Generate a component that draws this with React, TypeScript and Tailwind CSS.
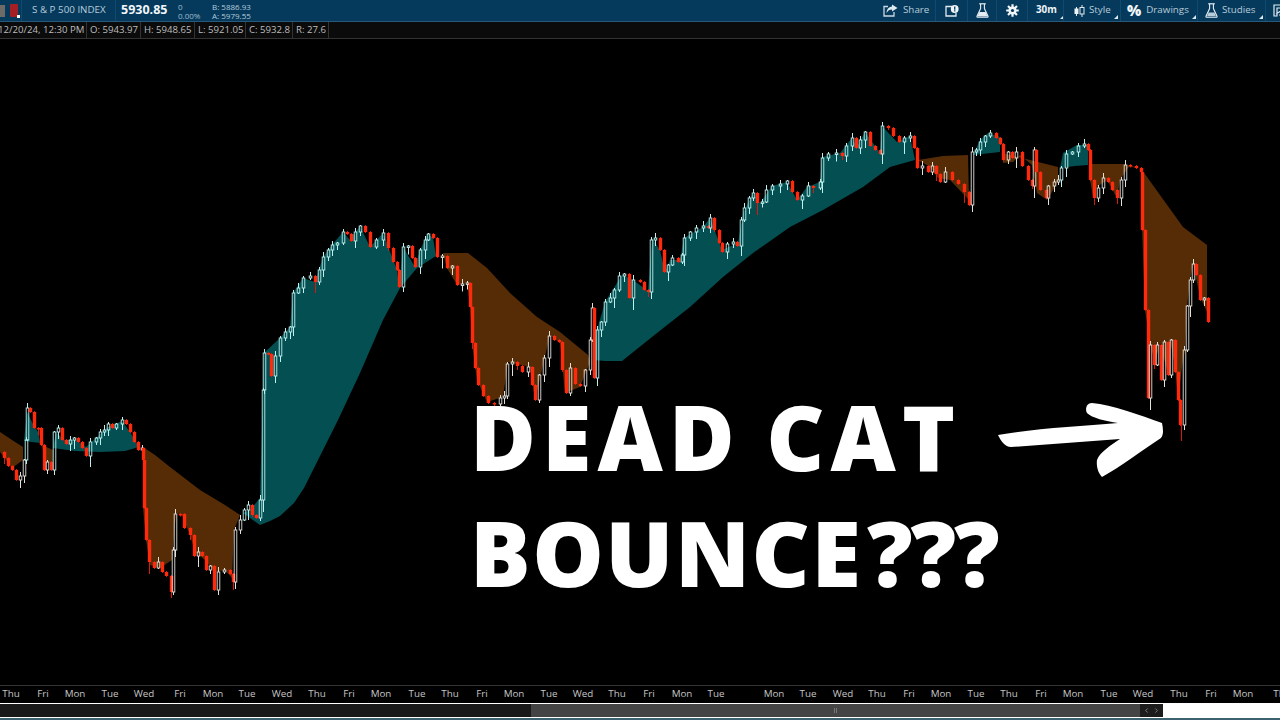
import React from "react";
import { ChevronLeft, ChevronRight } from "lucide-react";

type Pt = [number, number];

// ── Chart data (page coordinates, chart svg starts at y=39) ──────────────────

const PRICE: Pt[] = [
  [0, 452], [4, 458], [8, 466], [12, 470], [16, 480], [20, 476], [24, 460], [26, 440], [27, 408], [30, 412], [34, 428],
  [38, 428], [41, 445], [44, 470], [47, 462], [51, 470], [54, 432], [58, 428], [62, 440], [66, 444], [70, 440], [74, 438],
  [78, 442], [82, 448], [86, 456], [90, 442], [96, 438], [100, 432], [104, 430], [108, 424], [112, 428], [116, 424],
  [122, 420], [126, 424], [130, 432], [134, 442], [138, 450], [142, 448], [143, 460], [144, 508], [146, 540], [149, 562],
  [154, 568], [158, 562], [162, 572], [166, 576], [171, 592], [173, 550], [175, 514], [180, 514], [184, 528], [190, 535],
  [194, 556], [198, 552], [202, 556], [206, 570], [210, 566], [214, 590], [218, 572], [224, 570], [230, 574], [233, 582],
  [235, 530], [240, 520], [244, 510], [248, 505], [252, 515], [256, 518], [260, 500],
  [263, 390], [264, 353], [268, 354], [271, 376], [275, 356], [280, 338], [285, 332], [290, 327], [293, 293], [298, 288],
  [303, 278], [310, 276], [315, 282], [319, 270], [323, 257], [328, 250], [332, 245], [337, 243], [343, 232], [347, 234],
  [351, 241], [355, 232], [360, 226], [365, 232], [370, 247], [376, 240], [383, 233], [388, 248], [393, 262], [397, 270],
  [399, 287], [403, 247], [408, 246], [412, 258], [415, 267], [420, 250], [425, 240], [428, 234], [433, 238], [437, 257],
  [442, 256], [447, 268], [452, 266], [457, 285], [462, 284], [467, 283], [470, 307], [472, 343], [475, 368], [478, 385],
  [483, 396], [488, 403], [494, 404], [500, 398], [504, 396], [507, 364], [512, 362], [517, 366], [522, 372], [528, 367],
  [532, 385], [535, 400], [539, 375], [544, 358], [549, 336], [554, 340], [559, 342], [562, 370], [566, 393], [570, 368],
  [575, 384], [580, 386], [585, 370], [590, 340], [592, 308], [594, 378], [597, 330], [601, 322], [605, 302], [610, 298],
  [614, 290], [619, 276], [624, 274], [629, 298], [633, 280], [640, 282], [644, 290], [648, 292], [651, 240], [655, 238],
  [660, 250], [664, 272], [668, 265], [672, 258], [678, 262], [682, 255], [684, 238], [690, 232], [696, 228], [703, 226],
  [708, 228], [710, 218], [714, 230], [719, 243], [722, 252], [727, 244], [733, 242], [737, 246], [741, 220], [744, 208],
  [749, 198], [753, 193], [757, 203], [762, 202], [766, 190], [772, 186], [780, 184], [787, 181], [792, 192], [797, 200],
  [802, 196], [808, 186], [813, 188], [820, 182], [822, 158], [828, 154], [836, 153], [842, 156], [846, 146], [852, 138],
  [856, 148], [860, 140], [865, 132], [870, 146], [875, 150], [880, 154], [882, 126], [888, 128], [893, 136], [899, 142],
  [904, 138], [910, 136], [914, 148], [917, 168], [922, 166], [928, 172], [932, 166], [936, 174], [940, 182], [945, 172],
  [952, 180], [958, 184], [964, 192], [969, 205], [972, 152], [976, 150], [980, 142], [985, 136], [990, 133], [996, 138],
  [1000, 144], [1003, 160], [1008, 152], [1012, 158], [1016, 152], [1022, 166], [1028, 180], [1032, 186], [1034, 150],
  [1036, 172], [1040, 190], [1046, 198], [1048, 186], [1054, 182], [1058, 180], [1061, 168], [1066, 154], [1072, 152],
  [1078, 146], [1084, 144], [1088, 150], [1090, 180], [1094, 198], [1098, 188], [1103, 178], [1108, 182], [1112, 190],
  [1117, 198], [1121, 180], [1125, 165], [1130, 166], [1136, 168], [1141, 172], [1142, 230], [1145, 310], [1148, 398],
  [1150, 345], [1154, 365], [1157, 345], [1161, 380], [1164, 342], [1168, 375], [1171, 340], [1175, 372], [1178, 400],
  [1180, 425], [1184, 350], [1187, 306], [1190, 280], [1193, 264], [1196, 275], [1200, 300], [1204, 298], [1208, 322],
];

const TEAL: Pt[][] = [
  [[24, 441], [27, 412], [33, 424], [38, 432], [40, 443]],
  [[53, 448], [56, 432], [64, 440], [76, 440], [86, 447], [96, 438], [108, 427], [122, 421], [130, 432], [139, 447], [125, 451], [100, 452], [75, 451]],
  [[243, 513], [250, 510], [260, 498], [263, 390], [264, 353], [280, 338], [290, 327], [293, 293], [303, 278], [315, 282], [323, 257], [332, 245], [343, 232], [350, 240], [360, 226], [370, 247], [383, 233], [397, 270], [399, 287], [403, 247], [415, 267], [420, 250], [428, 234], [433, 238], [436, 256], [417, 268], [400, 288], [383, 320], [360, 373], [338, 420], [320, 456], [304, 488], [294, 503], [280, 516], [270, 521], [260, 525]],
  [[594, 360], [597, 330], [605, 302], [622, 275], [633, 280], [648, 291], [652, 238], [660, 250], [665, 272], [670, 260], [680, 260], [684, 238], [703, 227], [710, 218], [722, 250], [738, 243], [743, 213], [753, 193], [760, 203], [772, 186], [787, 182], [797, 200], [807, 187], [820, 182], [822, 157], [840, 153], [852, 138], [857, 147], [865, 132], [880, 153], [882, 126], [897, 142], [910, 136], [915, 160], [890, 167], [863, 187], [823, 210], [790, 227], [753, 253], [723, 277], [690, 307], [657, 333], [622, 361], [605, 361]],
  [[973, 155], [980, 140], [988, 133], [1000, 137], [1000, 152], [982, 154]],
  [[1060, 168], [1063, 153], [1077, 145], [1088, 145], [1088, 165], [1075, 166]],
];

const BROWN: Pt[][] = [
  [[0, 432], [12, 440], [23, 447], [23, 460], [12, 468], [0, 452]],
  [[42, 445], [53, 450], [53, 462], [45, 462]],
  [[143, 447], [155, 455], [170, 467], [200, 490], [225, 505], [240, 515], [234, 530], [232, 578], [225, 570], [215, 572], [205, 560], [195, 552], [190, 535], [182, 515], [176, 513], [172, 560], [160, 568], [150, 565], [146, 540], [143, 508]],
  [[443, 253], [468, 253], [487, 268], [510, 293], [537, 317], [560, 332], [588, 355], [590, 362], [580, 387], [565, 393], [560, 343], [550, 335], [535, 400], [530, 367], [508, 362], [503, 397], [487, 402], [477, 380], [472, 343], [470, 307], [467, 283], [457, 285], [447, 268]],
  [[918, 160], [943, 156], [968, 155], [969, 200], [950, 180], [938, 178], [930, 167]],
  [[1002, 153], [1022, 158], [1058, 167], [1058, 182], [1047, 200], [1037, 193], [1032, 165], [1020, 155], [1013, 162], [1003, 163]],
  [[1090, 164], [1123, 164], [1142, 170], [1183, 227], [1207, 245], [1207, 312], [1200, 297], [1193, 263], [1190, 280], [1187, 307], [1185, 350], [1182, 367], [1178, 400], [1175, 367], [1170, 340], [1167, 370], [1160, 343], [1155, 363], [1150, 343], [1145, 310], [1142, 227], [1141, 170], [1130, 165], [1120, 180], [1117, 198], [1107, 180], [1097, 187], [1093, 197], [1090, 180]],
];

const pts = (p: Pt[]) => p.map(([x, y]) => `${x},${y}`).join(" ");

// true when this stretch of the price sits on a teal cloud, candles get a cyan tint
function onTeal(x: number) {
  return (x > 24 && x < 40) || (x > 53 && x < 140) || (x > 243 && x < 437) || (x > 594 && x < 915) || (x > 972 && x < 1000) || (x > 1060 && x < 1088);
}

function Candles() {
  return (
    <g>
      {PRICE.slice(1).map(([x, close], i) => {
        const open = PRICE[i][1];
        const top = Math.min(open, close);
        const h = Math.max(Math.abs(close - open), 1.5);
        const up = close < open;
        const wick = ((i * 7) % 5) + 1;
        const tail = ((i * 11) % 7) + (i % 4 === 0 ? 6 : 1);
        if (!up) {
          return (
            <g key={x}>
              <line x1={x + 0.5} x2={x + 0.5} y1={top - 1} y2={top + h + (i % 5 === 0 ? tail : 1)} stroke="#d81a10" strokeWidth="1" />
              <rect x={x - 1.2} y={top} width="3.4" height={h} fill="#ff2a0c" />
            </g>
          );
        }
        const c = onTeal(x) ? "#bdf0ee" : "#e4e0da";
        return (
          <g key={x}>
            <line x1={x + 0.5} x2={x + 0.5} y1={top - wick} y2={top} stroke={c} strokeWidth="1" />
            <line x1={x + 0.5} x2={x + 0.5} y1={top + h} y2={top + h + tail} stroke={c} strokeWidth="1" />
            <rect x={x - 0.8} y={top} width="2.6" height={h} fill="none" stroke={c} strokeWidth="0.9" />
          </g>
        );
      })}
      <line x1="1181.5" x2="1181.5" y1="424" y2="441" stroke="#d81a10" strokeWidth="1" />
    </g>
  );
}

// ── Top bar icons ────────────────────────────────────────────────────────────

function ShareIcon() {
  return (
    <svg width="15" height="13" viewBox="0 0 15 13" className="shrink-0">
      <path d="M5 2.5H1v9.5h10V8" fill="none" stroke="#c9d8e2" strokeWidth="1.3" />
      <path d="M9 0.5 14.5 4 9 7.5V5.5C6.5 5.5 5 6.5 3.5 9 3.8 5.5 5.5 2.8 9 2.5Z" fill="#dfe9f0" />
    </svg>
  );
}

function AlertIcon() {
  return (
    <svg width="14" height="12" viewBox="0 0 14 12" className="shrink-0">
      <path d="M7 1.5H1v9.5h10V8" fill="none" stroke="#dfe9f0" strokeWidth="1.3" />
      <circle cx="9.7" cy="4" r="3.9" fill="#eef4f8" />
      <rect x="9.1" y="1.5" width="1.3" height="3.2" fill="#053a5c" />
      <rect x="9.1" y="5.2" width="1.3" height="1.2" fill="#053a5c" />
    </svg>
  );
}

function Flask({ outline }: { outline?: boolean }) {
  return (
    <svg width="13" height="15" viewBox="0 0 13 15" className="shrink-0">
      <path d="M3.2 0.8h6.6" stroke="#e6eef3" strokeWidth="1.2" />
      <path d="M4.6 1v4.6L1 13.2c-.2.6 0 1 .7 1h9.6c.7 0 .9-.4.7-1L8.4 5.6V1" fill="none" stroke="#e6eef3" strokeWidth="1.1" />
      {outline ? null : <path d="M3.4 9h6.2l2 4.6H1.4Z" fill="#e6eef3" />}
      {outline ? <path d="M3.6 9.5h5.8l1.6 3.8H2Z" fill="#b9ccd9" /> : null}
    </svg>
  );
}

function Gear() {
  return (
    <svg width="13" height="13" viewBox="0 0 13 13" className="shrink-0">
      <g stroke="#f0f5f8" strokeWidth="2.2">
        <path d="M6.5 0.2v12.6M0.2 6.5h12.6M2 2l9 9M11 2l-9 9" />
      </g>
      <circle cx="6.5" cy="6.5" r="4" fill="#f0f5f8" />
      <circle cx="6.5" cy="6.5" r="1.6" fill="#053a5c" />
    </svg>
  );
}

function CandleIcon() {
  return (
    <svg width="11" height="14" viewBox="0 0 11 14" className="shrink-0">
      <path d="M2.5 3v9M8 1v12" stroke="#dfe9f0" strokeWidth="1" />
      <rect x="0.5" y="4.5" width="4" height="5.5" fill="#eef4f8" />
      <rect x="6" y="3.5" width="4" height="6.5" fill="#053a5c" stroke="#dfe9f0" />
    </svg>
  );
}

function Caret() {
  return <span className="ml-[3px] mt-[13px] h-0 w-0 shrink-0 border-b-[4px] border-l-[4px] border-b-[#dfe9f0] border-l-transparent" />;
}

const Sep = () => <span className="h-full w-px shrink-0 bg-[#0f4a70]" />;

// ── Bottom axis ──────────────────────────────────────────────────────────────

const TICKS: [string, number][] = [
  ["Thu", 11], ["Fri", 43], ["Mon", 75], ["Tue", 110], ["Wed", 144], ["Fri", 180], ["Mon", 213], ["Tue", 247], ["Wed", 282],
  ["Thu", 317], ["Fri", 349], ["Mon", 381], ["Tue", 417], ["Thu", 450], ["Fri", 482], ["Mon", 514], ["Tue", 549], ["Wed", 583],
  ["Thu", 617], ["Fri", 649], ["Mon", 682], ["Tue", 716], ["Mon", 774], ["Tue", 808], ["Wed", 843], ["Thu", 877], ["Fri", 909],
  ["Mon", 941], ["Tue", 976], ["Thu", 1009], ["Fri", 1041], ["Mon", 1073], ["Tue", 1109], ["Wed", 1143], ["Thu", 1179],
  ["Fri", 1211], ["Mon", 1243], ["Thu", 1282],
];

const CELLS = ["O: 5943.97", "H: 5948.65", "L: 5921.05", "C: 5932.8", "R: 27.6"];

export default function App() {
  return (
    <div className="flex h-[720px] w-[1280px] flex-col overflow-hidden bg-black font-['Open_Sans',sans-serif]">
      {/* Header */}
      <div className="flex h-[22px] shrink-0 items-center border-b border-[#2a5878] bg-[#053a5c]">
        <div className="flex h-full w-[21px] shrink-0 items-center gap-[5px]">
          <span className="h-[12px] w-[5px] bg-[#6d6a68]" />
          <span className="relative h-[13px] w-[8px] rounded-[1px] bg-[#a51e24]">
            <span className="absolute -bottom-px -right-[2px] h-[3px] w-[3px] bg-white" />
          </span>
        </div>
        <Sep />
        <span className="ml-[10px] w-[83px] shrink-0 text-[9.8px] text-[#b5cbdb]">S &amp; P 500 INDEX</span>
        <Sep />
        <span className="ml-[5px] w-[57px] shrink-0 text-[12.5px] font-bold text-[#f2f6f9]">5930.85</span>
        <div className="flex w-[34px] shrink-0 flex-col text-[8px] leading-[9px] text-[#9fbacd]">
          <span>0</span>
          <span>0.00%</span>
        </div>
        <div className="flex shrink-0 flex-col text-[8px] leading-[9px] text-[#b5cbdb]">
          <span>B: 5886.93</span>
          <span>A: 5979.55</span>
        </div>

        <div className="ml-auto mr-[-7px] flex h-full shrink-0 items-center text-[9.8px] text-[#b9ccd9]">
          <div className="flex h-full w-[60px] items-center gap-[5px] pl-[8px]">
            <ShareIcon />
            <span>Share</span>
          </div>
          <Sep />
          <div className="flex h-full w-[31px] items-center justify-center"><AlertIcon /></div>
          <Sep />
          <div className="flex h-full w-[28px] items-center justify-center"><Flask /></div>
          <Sep />
          <div className="flex h-full w-[30px] items-center justify-center"><Gear /></div>
          <Sep />
          <div className="flex h-full w-[35px] items-center pl-[8px]">
            <span className="font-bold text-[#eef4f8]">30m</span>
            <Caret />
          </div>
          <Sep />
          <div className="flex h-full w-[56px] items-center pl-[10px]">
            <CandleIcon />
            <span className="ml-[4px]">Style</span>
            <Caret />
          </div>
          <Sep />
          <div className="flex h-full w-[76px] items-center pl-[6px]">
            <span className="text-[15px] font-extrabold text-[#f2f6f9]">%</span>
            <span className="ml-[5px]">Drawings</span>
            <Caret />
          </div>
          <Sep />
          <div className="flex h-full w-[67px] items-center pl-[7px]">
            <Flask outline />
            <span className="ml-[4px]">Studies</span>
            <Caret />
          </div>
          <Sep />
          <div className="flex h-full w-[21px] items-center pl-[7px]">
            <svg width="13" height="13" viewBox="0 0 13 13" className="shrink-0">
              <path d="M1 1h11v3H4v8H1ZM3 10 11 5M6 11h6" fill="none" stroke="#dfe9f0" strokeWidth="1.2" />
            </svg>
          </div>
        </div>
      </div>

      {/* OHLC row */}
      <div className="flex h-[17px] shrink-0 items-center overflow-hidden border-b border-[#333333] bg-[#0b0b0b] text-[9.6px] text-[#bdbdbd]">
        <span className="ml-[-2px] flex h-full w-[89px] shrink-0 items-center whitespace-nowrap border-r border-[#333333]">12/20/24, 12:30 PM</span>
        {CELLS.map((c, i) => (
          <span
            key={c}
            className={
              "flex h-full shrink-0 items-center whitespace-nowrap border-r border-[#333333] pl-[3px] " +
              (i < 3 ? (i === 2 ? "w-[51px]" : "w-[54px]") : i === 3 ? "w-[47px]" : "w-[36px]")
            }
          >
            {c}
          </span>
        ))}
      </div>

      {/* Chart */}
      <div className="relative h-[646px] shrink-0 overflow-hidden bg-black">
        <svg width="1280" height="646" viewBox="0 39 1280 646" className="block">
          {TEAL.map((p, i) => (
            <polygon key={i} points={pts(p)} fill="#034f52" />
          ))}
          {BROWN.map((p, i) => (
            <polygon key={i} points={pts(p)} fill="#562c07" />
          ))}
          <Candles />
          <path
            d="M998 435C1001 441 1005 447 1011 447L1120 439C1110 446 1100 452 1097 460C1096 468 1099 474 1102 477C1120 467 1140 452 1161 438C1164 434 1163 428 1162 423C1140 415 1112 405 1092 403C1086 403 1085 410 1087 413C1092 418 1105 421 1118 423C1080 426 1030 429 998 435Z"
            fill="#fff"
          />
        </svg>
        <div className="absolute left-[470px] top-[339px] whitespace-nowrap text-[90px] font-extrabold leading-[116px] text-white">
          <div className="tracking-[6px] [word-spacing:-4px]">DEAD CAT</div>
          <div className="tracking-[1.5px]">
            BOUNCE<span className="ml-[5px] tracking-[-2px]">???</span>
          </div>
        </div>
      </div>

      {/* Time axis */}
      <div className="relative h-[18px] shrink-0 border-t border-[#333333] bg-black text-[9.8px] text-[#c6c6c6]">
        {TICKS.map(([d, x]) => (
          <span key={`${d}${x}`} className="absolute top-[1px] -translate-x-1/2" style={{ left: x }}>
            {d}
          </span>
        ))}
      </div>

      {/* Scrollbar */}
      <div className="flex h-[17px] shrink-0 flex-col bg-white">
        <div className="mt-px flex h-[13px] shrink-0">
          <div className="w-[531px] bg-[#191919]" />
          <div className="flex w-[609px] items-center justify-center bg-[#444444]">
            <span className="h-[5px] w-[3px] border-x border-[#777777]" />
          </div>
          <div className="flex w-[23px] items-center justify-center gap-[3px] bg-[#1c1c1c] text-[#888888]">
            <ChevronLeft size={7} strokeWidth={3} />
            <ChevronRight size={7} strokeWidth={3} />
          </div>
        </div>
        <div className="mt-auto h-[2px] bg-[#3c6270]" />
      </div>
    </div>
  );
}
